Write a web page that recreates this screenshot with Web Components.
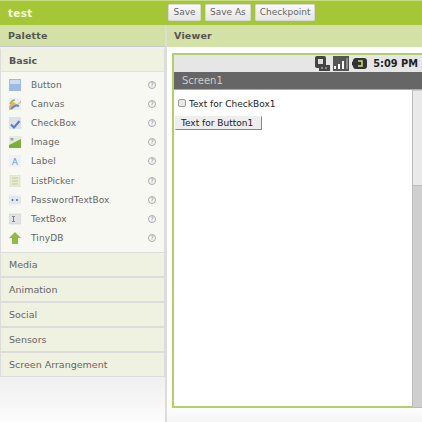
<!DOCTYPE html>
<html>
<head>
<meta charset="utf-8">
<style>
  html, body { margin: 0; padding: 0; }
  body { width: 422px; height: 422px; overflow: hidden; font-family: "DejaVu Sans", sans-serif; background: #fff; }
</style>
</head>
<body>
<app-shell>
  <top-bar slot="top" name="test">
    <tool-button>Save</tool-button>
    <tool-button>Save As</tool-button>
    <tool-button>Checkpoint</tool-button>
  </top-bar>
  <palette-panel slot="left">
    <drawer-head open>Basic</drawer-head>
    <div style="background:#f7f8f1;padding:3px 0 4px;border:solid #dcdcdc;border-width:0 1px">
      <palette-item name="Button"><svg viewBox="0 0 12 12"><rect width="12" height="12" fill="#9dbbe2"/><rect x="1" y="1" width="10" height="4" fill="#cfdcf0"/></svg></palette-item>
      <palette-item name="Canvas"><svg viewBox="0 0 12 12"><rect width="12" height="12" fill="#e8eef2"/><path d="M0 9 Q3 2 6 5 T12 2 V5 Q8 6 6 9 T0 12Z" fill="#e9b45a"/><path d="M2 11 Q6 6 10 8" stroke="#5f8ad0" stroke-width="2" fill="none"/><path d="M1 6 Q3 2 6 2" stroke="#8abb5a" stroke-width="1.500" fill="none"/></svg></palette-item>
      <palette-item name="CheckBox"><svg viewBox="0 0 12 12"><rect width="12" height="12" fill="#dfe1e8"/><path d="M2 7.500 L5 10.500 L10.500 4" stroke="#4f80ca" stroke-width="2" fill="none"/></svg></palette-item>
      <palette-item name="Image"><svg viewBox="0 0 12 12"><rect width="12" height="12" fill="#e4ebe2"/><path d="M0 9 L12 3 V12 H0Z" fill="#7cb03a"/><rect x="1.500" y="2" width="3" height="2.500" fill="#9aa898"/></svg></palette-item>
      <palette-item name="Label"><svg viewBox="0 0 12 12"><rect width="12" height="12" fill="#edf0f7"/><text x="6" y="10" font-size="8.500" font-family="DejaVu Sans" text-anchor="middle" fill="#6c92d4">A</text></svg></palette-item>
      <palette-item name="ListPicker"><svg viewBox="0 0 12 12"><rect x="1" width="10" height="12" fill="#e8ead9" stroke="#d0d2c8" stroke-width=".5"/><path d="M3 3H9M3 6H9M3 9H9" stroke="#c6cc8e"/></svg></palette-item>
      <palette-item name="PasswordTextBox"><svg viewBox="0 0 12 12"><rect y="1.500" width="12" height="9" fill="#e4e6f0"/><circle cx="3.500" cy="6" r="1" fill="#4a6fae"/><circle cx="8" cy="6" r="1" fill="#4a6fae"/></svg></palette-item>
      <palette-item name="TextBox"><svg viewBox="0 0 12 12"><rect y="1" width="12" height="10" fill="#e2e4e4" stroke="#c4c6c6" stroke-width=".5"/><path d="M3 3.500H6M4.500 3.500V8.500M3 8.500H6" stroke="#80858c"/></svg></palette-item>
      <palette-item name="TinyDB"><svg viewBox="0 0 12 12"><path d="M6 0 L12 6 H9 V12 H3 V6 H0Z" fill="#93bb44"/></svg></palette-item>
    </div>
    <drawer-head>Media</drawer-head>
    <drawer-head>Animation</drawer-head>
    <drawer-head>Social</drawer-head>
    <drawer-head>Sensors</drawer-head>
    <drawer-head>Screen Arrangement</drawer-head>
  </palette-panel>
  <viewer-panel slot="right">
    <phone-frame title-text="Screen1" time="5:09 PM">
      <div style="display:flex;align-items:center;gap:3px;padding:7px 0 0 4px;font-size:9px;height:14px;color:#222">
        <span style="width:8px;height:8px;border:1px solid #999;border-radius:2px;background:#e8e8e8;box-sizing:border-box;margin-bottom:3px"></span>
        <span>Text for CheckBox1</span>
      </div>
      <div style="padding:0 0 0 1px">
        <span style="display:inline-block;box-sizing:border-box;height:14px;line-height:12px;padding:0 5px;font-size:9px;color:#222;background:#eeeeee;border:1px solid;border-color:#eee #888 #888 #eee;width:87px">Text for Button1</span>
      </div>
    </phone-frame>
  </viewer-panel>
</app-shell>
<script>
class AppShell extends HTMLElement {
  constructor() {
    super();
    this.attachShadow({ mode: 'open' });
    this.shadowRoot.innerHTML = `
      <style>
        :host { display: grid; grid-template-columns: 165px 1fr; grid-template-rows: 25px 1fr; width: 422px; height: 422px; }
        .top { grid-column: 1 / 3; display: block; }
      </style>
      <div class="top"><slot name="top"></slot></div>
      <slot name="left"></slot>
      <slot name="right"></slot>
    `;
  }
}

class TopBar extends HTMLElement {
  constructor() {
    super();
    this.attachShadow({ mode: 'open' });
    this.shadowRoot.innerHTML = `
      <style>
        :host { display: flex; align-items: center; height: 25px; box-sizing: border-box; background: #a5c636; border-top: 1px solid #c8dc80; }
        .name { width: 168px; box-sizing: border-box; padding-left: 8px; color: #f4f8e4; font: bold 10.500px "DejaVu Sans", sans-serif; letter-spacing: .3px; }
        .tools { display: flex; gap: 4px; margin-top: -1px; }
      </style>
      <div class="name"></div>
      <div class="tools"><slot></slot></div>
    `;
    this.shadowRoot.querySelector('.name').textContent = this.getAttribute('name');
  }
}

class ToolButton extends HTMLElement {
  constructor() {
    super();
    this.attachShadow({ mode: 'open' });
    this.shadowRoot.innerHTML = `
      <style>
        :host { display: block; box-sizing: border-box; min-width: 33px; height: 17px; line-height: 15px; padding: 0 4px; text-align: center; font-size: 9px; color: #666; background: linear-gradient(#fafafa, #e6e6e6); border: 1px solid #d8d8d8; border-radius: 1px; }
      </style>
      <slot></slot>
    `;
  }
}

class PalettePanel extends HTMLElement {
  constructor() {
    super();
    this.attachShadow({ mode: 'open' });
    this.shadowRoot.innerHTML = `
      <style>
        :host { display: block; height: 397px; background: linear-gradient(#f0f0f0 353px, #fcfcfc); box-sizing: border-box; }
        .head { height: 22px; line-height: 22px; padding-left: 8px; box-sizing: border-box; background: #d3e0a6; color: #555; font-weight: bold; font-size: 9.500px; letter-spacing: .2px; border-bottom: 1px solid #c9c9c9; margin-bottom: 1px; }
      </style>
      <div class="head">Palette</div>
      <slot></slot>
    `;
  }
}

class DrawerHead extends HTMLElement {
  constructor() {
    super();
    this.attachShadow({ mode: 'open' });
    this.shadowRoot.innerHTML = `
      <style>
        :host { display: block; box-sizing: border-box; height: 25px; line-height: 23px; padding-left: 8px; font-size: 9.500px; color: #666; background: #eff1e1; border: 1px solid #dcdcdc; }
        :host([open]) { font-weight: bold; color: #555; height: 24px; border-color: #f0f0f0 #dcdcdc #e2e2e2; }
      </style>
      <slot></slot>
    `;
  }
}

class PaletteItem extends HTMLElement {
  constructor() {
    super();
    this.attachShadow({ mode: 'open' });
    this.shadowRoot.innerHTML = `
      <style>
        :host { display: flex; align-items: center; height: 19.200px; font-size: 9px; color: #666; }
        .icon { width: 12px; height: 12px; margin-left: 8px; }
        .icon ::slotted(svg) { display: block; width: 12px; height: 12px; }
        .name { margin-left: 10px; flex: 1; letter-spacing: .1px; }
        .help { width: 8px; height: 8px; margin-right: 8px; box-sizing: border-box; border: 1px solid #aaa; border-radius: 50%; font-size: 6px; line-height: 6px; text-align: center; color: #888; }
      </style>
      <div class="icon"><slot></slot></div>
      <div class="name"></div>
      <div class="help">?</div>
    `;
    this.shadowRoot.querySelector('.name').textContent = this.getAttribute('name');
  }
}

class ViewerPanel extends HTMLElement {
  constructor() {
    super();
    this.attachShadow({ mode: 'open' });
    this.shadowRoot.innerHTML = `
      <style>
        :host { display: block; height: 397px; border-left: 2px solid #dcdcdc; background: #fafafa; }
        .head { height: 22px; line-height: 22px; padding-left: 7px; background: #d3e0a6; color: #555; font-weight: bold; font-size: 9.500px; letter-spacing: .2px; }
        .body { padding: 6px 0 0 5px; background: linear-gradient(#fff, #fff 360px, #f4f4f4); height: 369px; }
      </style>
      <div class="head">Viewer</div>
      <div class="body"><slot></slot></div>
    `;
  }
}

class PhoneFrame extends HTMLElement {
  constructor() {
    super();
    this.attachShadow({ mode: 'open' });
    this.shadowRoot.innerHTML = `
      <style>
        :host { display: block; box-sizing: border-box; height: 355px; border: solid #b3cf6a; border-width: 2px 0 2px 2px; background: #fff; }
        .status { height: 17px; background: #e6e6e6; display: flex; align-items: center; justify-content: flex-end; padding-right: 4px; gap: 3px; }
        .status svg { display: block; }
        .time { margin-left: 3px; font-size: 9.800px; font-weight: bold; color: #222; }
        .title { height: 17px; line-height: 17px; padding-left: 8px; background: #666; color: #ccc; font-size: 10px; border-bottom: 1px solid #aaa; }
        .main { display: flex; height: 317px; }
        .content { flex: 1; }
        .bar { width: 10px; background: #cfcfcf; border-left: 1px solid #bbb; box-sizing: border-box; }
        .thumb { height: 94px; margin-top: 1px; background: #e9e9e9; border-bottom: 1px solid #bbb; }
      </style>
      <div class="status">
        <svg width="15" height="15" viewBox="0 0 15 15"><rect width="11" height="12" rx="2" fill="#444"/><rect x="3" y="3" width="5" height="5" fill="#ddd"/><rect x="4" y="9" width="11" height="6" fill="#444"/><path d="M6 12h2M10 12h2" stroke="#ccc"/></svg>
        <svg width="16" height="15" viewBox="0 0 16 15"><rect width="16" height="15" fill="#555"/><path d="M2 13v-3M6 13v-5M10 13v-8" stroke="#fff" stroke-width="2"/><path d="M14 13V2" stroke="#888" stroke-width="2"/></svg>
        <svg width="15" height="11" viewBox="0 0 15 11"><rect x="1" width="14" height="11" rx="3" fill="#333"/><rect y="3.500" width="2" height="4" fill="#333"/><path d="M6 3h4v5H6" stroke="#cde07a" stroke-width="1.500" fill="none"/></svg>
        <span class="time"></span>
      </div>
      <div class="title"></div>
      <div class="main">
        <div class="content"><slot></slot></div>
        <div class="bar"><div class="thumb"></div></div>
      </div>
    `;
    this.shadowRoot.querySelector('.time').textContent = this.getAttribute('time');
    this.shadowRoot.querySelector('.title').textContent = this.getAttribute('title-text');
  }
}

customElements.define('app-shell', AppShell);
customElements.define('top-bar', TopBar);
customElements.define('tool-button', ToolButton);
customElements.define('palette-panel', PalettePanel);
customElements.define('drawer-head', DrawerHead);
customElements.define('palette-item', PaletteItem);
customElements.define('viewer-panel', ViewerPanel);
customElements.define('phone-frame', PhoneFrame);
</script>
</body>
</html>
